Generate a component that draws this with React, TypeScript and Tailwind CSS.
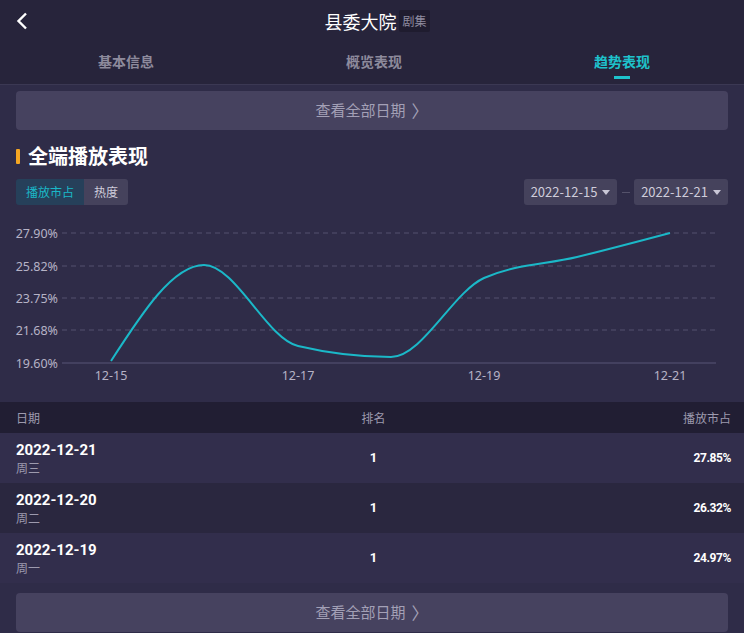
import React from "react";

const cjk = "font-['Noto_Sans_CJK_SC','Noto_Sans',sans-serif]";
const num = "font-['Roboto',sans-serif]";

const tabs = ["基本信息", "概览表现", "趋势表现"];

// chart data, in svg pixel coords
const xs = [111, 204, 298, 391, 484, 577, 670];
const ys = [146, 50, 131, 142, 63, 42, 18];
const gridY = [18, 51, 83, 115, 148];
const yLabels = ["27.90%", "25.82%", "23.75%", "21.68%", "19.60%"];
const xLabels = [
  { x: 111, t: "12-15" },
  { x: 298, t: "12-17" },
  { x: 484, t: "12-19" },
  { x: 670, t: "12-21" },
];

// monotone-x cubic, like the chart lib draws it
function smoothPath() {
  const n = xs.length;
  const sl: number[] = [];
  for (let i = 0; i < n - 1; i++) sl.push((ys[i + 1] - ys[i]) / (xs[i + 1] - xs[i]));
  const t: number[] = new Array(n).fill(0);
  for (let i = 1; i < n - 1; i++) {
    const h0 = xs[i] - xs[i - 1];
    const h1 = xs[i + 1] - xs[i];
    const s0 = sl[i - 1];
    const s1 = sl[i];
    const p = (s0 * h1 + s1 * h0) / (h0 + h1);
    t[i] = (Math.sign(s0) + Math.sign(s1)) * Math.min(Math.abs(s0), Math.abs(s1), 0.5 * Math.abs(p)) || 0;
  }
  t[0] = (3 * sl[0] - t[1]) / 2;
  t[n - 1] = (3 * sl[n - 2] - t[n - 2]) / 2;
  let d = `M${xs[0]},${ys[0]}`;
  for (let i = 0; i < n - 1; i++) {
    const dx = (xs[i + 1] - xs[i]) / 3;
    d += ` C${xs[i] + dx},${ys[i] + dx * t[i]} ${xs[i + 1] - dx},${ys[i + 1] - dx * t[i + 1]} ${xs[i + 1]},${ys[i + 1]}`;
  }
  return d;
}

const rows = [
  { date: "2022-12-21", week: "周三", rank: "1", share: "27.85%", bg: "bg-[#322e4c]" },
  { date: "2022-12-20", week: "周二", rank: "1", share: "26.32%", bg: "bg-[#2a273f]" },
  { date: "2022-12-19", week: "周一", rank: "1", share: "24.97%", bg: "bg-[#322e4c]" },
];

function MoreButton() {
  return (
    <button className="w-full h-[39px] rounded-[4px] bg-[#46425f] flex items-center justify-center gap-[6px] text-[15px] text-[#a3a0b6]">
      <span>查看全部日期</span>
      <span className="text-[17px] leading-none">〉</span>
    </button>
  );
}

function Caret() {
  return (
    <svg width="8" height="5" viewBox="0 0 8 5" className="ml-[5px]">
      <path d="M0 0 L8 0 L4 5 Z" fill="#c9c7d6" />
    </svg>
  );
}

export default function App() {
  return (
    <div className={`w-[744px] h-[633px] overflow-hidden bg-[#2f2c48] ${cjk}`}>
      {/* header */}
      <div className="bg-[#27243b] border-b border-[#3b3853]">
        <div className="h-[42px] flex items-center px-[15px]">
          <svg width="14" height="18" viewBox="0 0 14 18">
            <path d="M11 1.5 L3.5 9 L11 16.5" stroke="#ffffff" strokeWidth="2.4" fill="none" />
          </svg>
          <div className="flex-1 flex items-center justify-center gap-[3px] pr-[4px]">
            <span className="text-[18px] text-white">县委大院</span>
            <span className="text-[12px] text-[#8f8ca0] bg-[#1f1c2f] px-[3px] py-[2px] rounded-[2px]">剧集</span>
          </div>
        </div>
        <div className="h-[42px] grid grid-cols-3">
          {tabs.map((t, i) => (
            <div key={t} className="flex flex-col items-center pt-[10px] pl-[4px]">
              <span
                className={`text-[14px] leading-[18px] font-bold ${
                  i === 2 ? "text-[#1ec2cc]" : "text-[#8d8a9c]"
                }`}
              >
                {t}
              </span>
              {i === 2 && <div className="mt-[6px] w-[16px] h-[3px] bg-[#1ec2cc]" />}
            </div>
          ))}
        </div>
      </div>

      <div className="px-4 pt-[6px]">
        <MoreButton />

        <div className="mt-[13px] h-[26px] flex items-center gap-[8px]">
          <div className="w-[4px] h-[15px] bg-[#f5a623] rounded-[1px]" />
          <span className="text-[20px] font-bold text-white">全端播放表现</span>
        </div>

        <div className="mt-[10px] h-[26px] flex items-center justify-between">
          <div className="flex h-full rounded-[3px] overflow-hidden text-[12px]">
            <div className="w-[68px] flex items-center justify-center bg-[#26405a] text-[#1ab8c8]">播放市占</div>
            <div className="w-[44px] flex items-center justify-center bg-[#45425c] text-[#cfcddb]">热度</div>
          </div>
          <div className="flex items-center h-full text-[13px] text-[#cfcddb]">
            <div className="w-[93px] h-full rounded-[3px] bg-[#45425c] flex items-center justify-center">
              2022-12-15
              <Caret />
            </div>
            <div className="w-[17px] flex justify-center">
              <div className="w-[8px] h-[1px] bg-[#55526b]" />
            </div>
            <div className="w-[94px] h-full rounded-[3px] bg-[#45425c] flex items-center justify-center">
              2022-12-21
              <Caret />
            </div>
          </div>
        </div>
      </div>

      {/* chart */}
      <svg width="744" height="180" viewBox="0 0 744 180" className="mt-[10px] block">
        {gridY.map((y, i) =>
          i < 4 ? (
            <line key={y} x1="62" x2="716" y1={y} y2={y} stroke="#55516e" strokeWidth="1" strokeDasharray="5 4" />
          ) : (
            <line key={y} x1="62" x2="716" y1={y} y2={y} stroke="#4b4767" strokeWidth="1.5" />
          )
        )}
        {yLabels.map((l, i) => (
          <text
            key={l}
            x="58"
            y={gridY[i] + 4.5}
            textAnchor="end"
            fontSize="12.5"
            fill="#b6b3c6"
            fontFamily="'Noto Sans', sans-serif"
          >
            {l}
          </text>
        ))}
        {xLabels.map((l) => (
          <text
            key={l.t}
            x={l.x}
            y="165"
            textAnchor="middle"
            fontSize="12.5"
            fill="#b6b3c6"
            fontFamily="'Noto Sans', sans-serif"
          >
            {l.t}
          </text>
        ))}
        <path d={smoothPath()} stroke="#1bb8c8" strokeWidth="2" fill="none" />
      </svg>

      {/* table */}
      <div className="mt-[7px]">
        <div className="h-[31px] bg-[#211e33] grid grid-cols-3 items-center pl-4 pr-[13px] text-[12px] text-[#9d9aae]">
          <span>日期</span>
          <span className="text-center">排名</span>
          <span className="text-right">播放市占</span>
        </div>
        {rows.map((r) => (
          <div key={r.date} className={`h-[50px] ${r.bg} grid grid-cols-3 items-center pl-4 pr-[13px]`}>
            <div className="flex flex-col">
              <span className={`text-[15px] leading-[19px] font-bold text-white ${num}`}>{r.date}</span>
              <span className="text-[12px] leading-[15px] text-[#9d9aae]">{r.week}</span>
            </div>
            <span className={`text-center text-[13px] font-bold text-white ${num}`}>{r.rank}</span>
            <span className={`text-right text-[12px] tracking-[-0.4px] font-bold text-white ${num}`}>{r.share}</span>
          </div>
        ))}
      </div>

      <div className="px-4 mt-[10px]">
        <MoreButton />
      </div>
    </div>
  );
}
